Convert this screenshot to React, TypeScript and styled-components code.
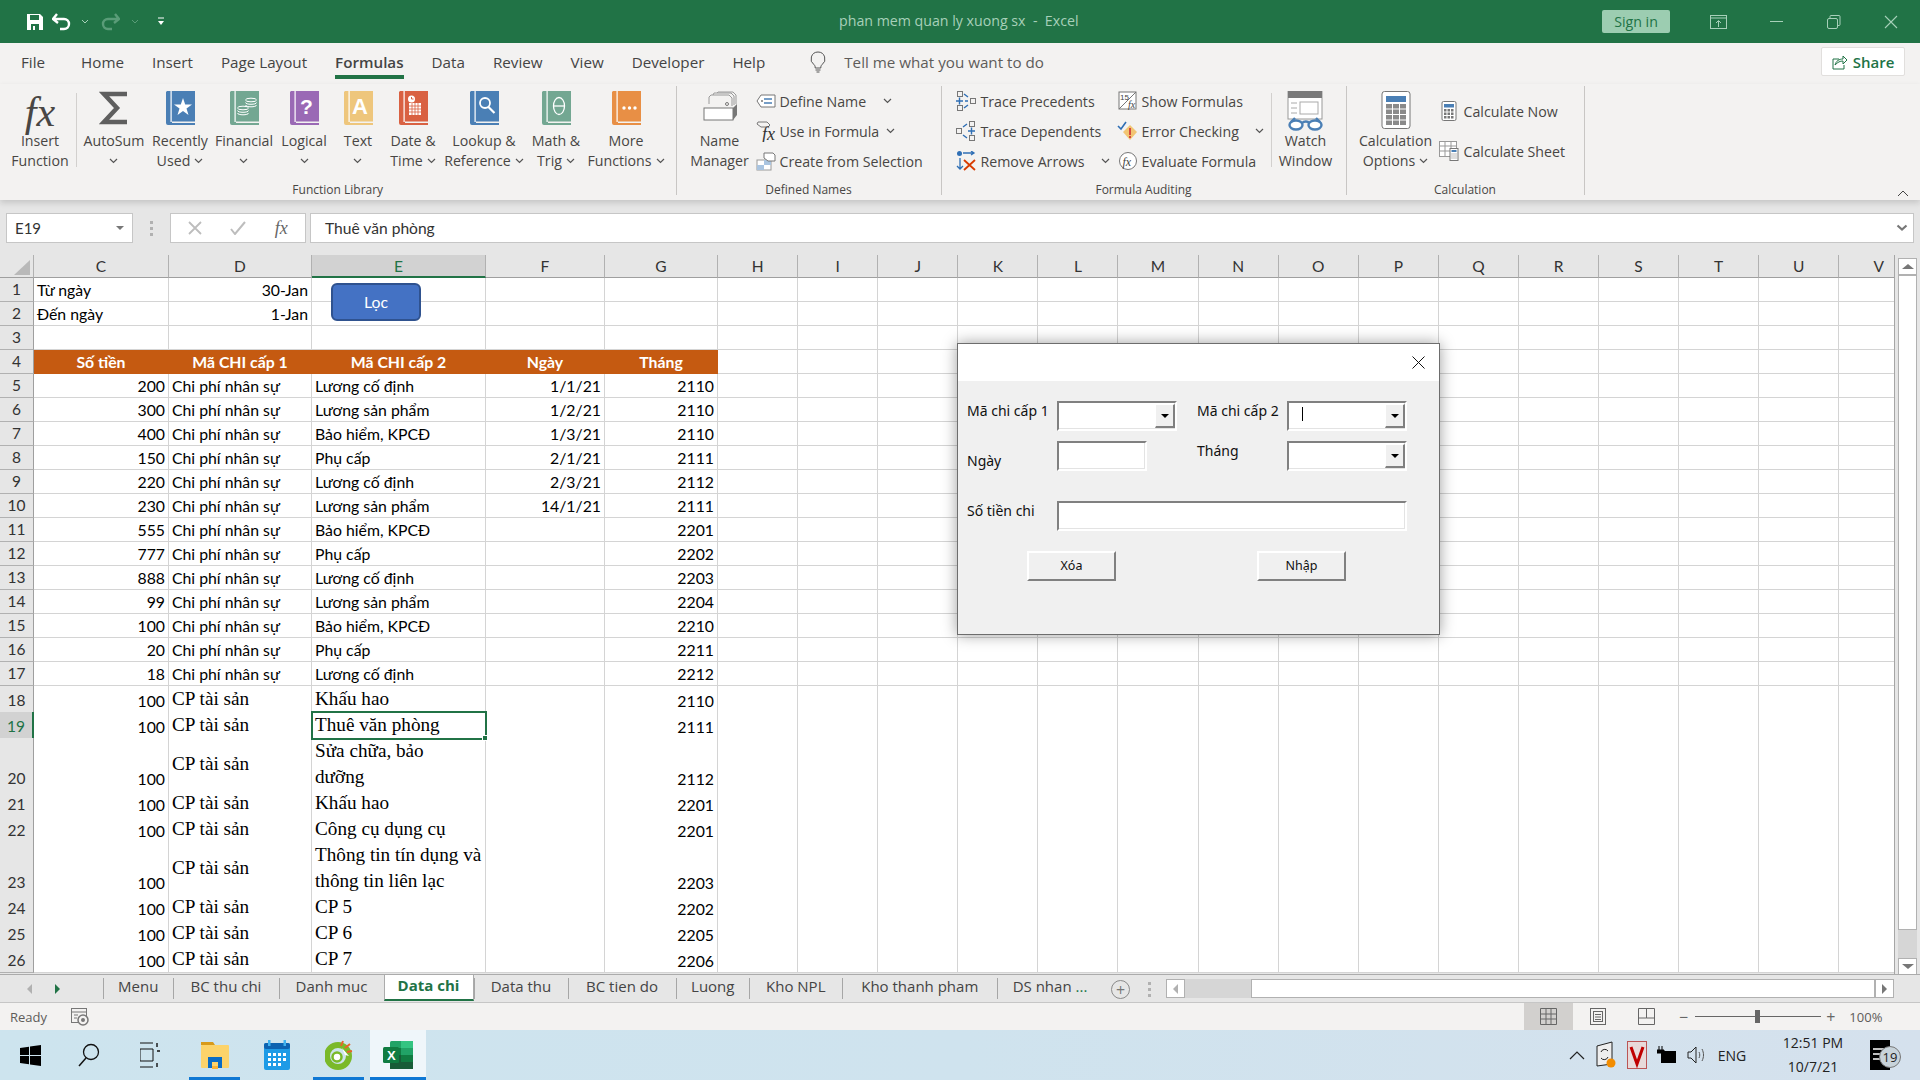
import React from 'react';
import styled, { createGlobalStyle } from 'styled-components';

const UI_FONT = '"Open Sans", "Noto Sans", sans-serif';
const CELL_FONT = 'Lato, "Noto Sans", sans-serif';
const SERIF_FONT = '"Liberation Serif", serif';
const GREEN = '#217346';

const GlobalStyle = createGlobalStyle`
  html, body {
    margin: 0;
    width: 1920px;
    height: 1080px;
    overflow: hidden;
    background: #e6e6e6;
    font-family: ${UI_FONT};
  }
  * { box-sizing: border-box; }
  svg { display: block; flex-shrink: 0; }
`;

const Page = styled.div`
  position: relative;
  width: 1920px;
  height: 1080px;
  display: flex;
  flex-direction: column;
  overflow: hidden;
`;

/* title bar */
const TitleBar = styled.div`
  height: 43px;
  flex-shrink: 0;
  background: ${GREEN};
  display: flex;
  align-items: center;
`;

const QuickAccess = styled.div`
  width: 839px;
  height: 43px;
  display: flex;
  align-items: center;
  padding-left: 27px;
`;

const QuickSlot = styled.div<{ $w: number }>`
  width: ${(p) => p.$w}px;
  display: flex;
  justify-content: center;
`;

const DocTitle = styled.div`
  color: #a7d0b9;
  font-size: 14.2px;
  margin-top: -3px;
  white-space: pre;
`;

const TitleRight = styled.div`
  margin-left: auto;
  display: flex;
  align-items: center;
`;

const SignIn = styled.div`
  width: 68px;
  height: 23px;
  margin-right: 20px;
  background: #9ccdb1;
  border-radius: 2px;
  color: ${GREEN};
  font-size: 14.2px;
  line-height: 23px;
  text-align: center;
`;

const WindowButton = styled.div`
  width: 57.5px;
  display: flex;
  justify-content: center;
`;

/* ribbon tabs */
const TabStrip = styled.div`
  height: 41px;
  flex-shrink: 0;
  background: #f3f2f1;
  display: flex;
  align-items: flex-start;
  padding-left: 21px;
  gap: 28px;
  color: #444;
`;

const RibbonTab = styled.div<{ $active?: boolean; $ml?: number }>`
  margin-top: 8px;
  margin-left: ${(p) => p.$ml || 0}px;
  line-height: 22px;
  padding-bottom: 2px;
  font-size: 15.2px;
  font-weight: ${(p) => (p.$active ? 600 : 400)};
  border-bottom: 4px solid ${(p) => (p.$active ? GREEN : 'transparent')};
  white-space: nowrap;
`;

const TellMe = styled.div`
  margin-top: 8px;
  margin-left: 17px;
  display: flex;
  align-items: center;
  height: 22px;
  gap: 18px;
  font-size: 15.2px;
  color: #5e5c5a;
`;

const ShareButton = styled.div`
  margin-left: auto;
  margin-right: 15px;
  margin-top: 4px;
  width: 84px;
  height: 29px;
  background: #fff;
  border: 1px solid #e1dfdd;
  border-radius: 2px;
  display: flex;
  align-items: center;
  justify-content: center;
  gap: 6px;
  color: ${GREEN};
  font-size: 15px;
  font-weight: 600;
`;

/* ribbon */
const Ribbon = styled.div`
  position: relative;
  z-index: 2;
  height: 116px;
  flex-shrink: 0;
  background: #f3f2f1;
  box-shadow: 0 3px 6px rgba(0, 0, 0, 0.14);
  display: flex;
  align-items: flex-start;
  padding-top: 2px;
  color: #484644;
`;

const Group = styled.div<{ $w: number }>`
  width: ${(p) => p.$w}px;
  height: 109px;
  flex-shrink: 0;
  border-right: 1px solid #c8c6c4;
`;

const GroupBody = styled.div<{ $pl?: number }>`
  height: 95px;
  display: flex;
  padding-left: ${(p) => p.$pl || 0}px;
`;

const GroupLabel = styled.div`
  height: 14px;
  line-height: 18px;
  text-align: center;
  font-size: 12px;
  color: #484644;
`;

const LargeButton = styled.div<{ $w: number }>`
  width: ${(p) => p.$w}px;
  flex-shrink: 0;
  padding-top: 5px;
  display: flex;
  flex-direction: column;
  align-items: center;
`;

const LargeIcon = styled.div`
  height: 34px;
  display: flex;
  align-items: flex-start;
  justify-content: center;
`;

const LargeLabel = styled.div`
  margin-top: 6px;
  font-size: 14.2px;
  line-height: 20px;
  text-align: center;
  white-space: nowrap;
`;

const InlineLine = styled.div`
  display: flex;
  align-items: center;
  justify-content: center;
  gap: 4px;
  height: 20px;
`;

const SmallDivider = styled.div<{ $ml?: number }>`
  width: 1px;
  height: 74px;
  margin-top: 7px;
  margin-left: ${(p) => p.$ml || 0}px;
  flex-shrink: 0;
  background: #d2d0ce;
`;

const SmallColumn = styled.div<{ $w?: number; $ml?: number; $rowH: number; $pt?: number }>`
  width: ${(p) => (p.$w ? `${p.$w}px` : 'auto')};
  margin-left: ${(p) => p.$ml || 0}px;
  padding-top: ${(p) => p.$pt || 0}px;
  flex-shrink: 0;
  display: grid;
  grid-auto-rows: ${(p) => p.$rowH}px;
`;

const SmallButton = styled.div<{ $gap?: number }>`
  display: flex;
  align-items: center;
  gap: ${(p) => p.$gap || 4}px;
  font-size: 14.2px;
  white-space: nowrap;
`;

const SmallIcon = styled.div`
  width: 20px;
  height: 20px;
  display: flex;
  align-items: center;
  justify-content: center;
`;

const ChevronSlot = styled.div<{ $ml: number }>`
  margin-left: ${(p) => p.$ml}px;
`;

const CollapseButton = styled.div`
  margin-left: auto;
  margin-right: 11px;
  margin-top: 104px;
`;

/* formula bar */
const FormulaBar = styled.div`
  height: 55px;
  flex-shrink: 0;
  background: #e6e6e6;
  padding: 13px 6px 0;
  display: flex;
  align-items: flex-start;
`;

const NameBox = styled.div`
  width: 127px;
  height: 30px;
  background: #fff;
  border: 1px solid #c6c6c6;
  display: flex;
  align-items: center;
  justify-content: space-between;
  padding: 0 8px;
  font-family: ${CELL_FONT};
  font-size: 15px;
  color: #333;
`;

const DownTriangle = styled.span<{ $color?: string }>`
  width: 0;
  height: 0;
  border-left: 4px solid transparent;
  border-right: 4px solid transparent;
  border-top: 4px solid ${(p) => p.$color || '#777'};
`;

const Grip = styled.div`
  width: 37px;
  height: 30px;
  display: flex;
  flex-direction: column;
  align-items: center;
  justify-content: center;
  gap: 3px;
  padding-right: 1px;
  span {
    width: 3px;
    height: 3px;
    background: #b1b1b1;
  }
`;

const FxBox = styled.div`
  width: 136px;
  height: 30px;
  background: #fff;
  border: 1px solid #c6c6c6;
  display: flex;
  align-items: center;
  justify-content: space-around;
  padding: 0 3px;
`;

const FormulaInput = styled.div`
  margin-left: 4px;
  width: 1604px;
  height: 30px;
  background: #fff;
  border: 1px solid #c6c6c6;
  display: flex;
  align-items: center;
  justify-content: space-between;
  padding: 0 5px 0 14px;
  font-family: ${CELL_FONT};
  font-size: 15.6px;
  color: #333;
`;

const FxMark = styled.span<{ $size: number; $color: string }>`
  font-family: ${SERIF_FONT};
  font-style: italic;
  font-size: ${(p) => p.$size}px;
  line-height: 1;
  color: ${(p) => p.$color};
`;

/* sheet */
const SheetArea = styled.div`
  height: 719px;
  flex-shrink: 0;
  display: flex;
  background: #e6e6e6;
`;

const Grid = styled.div`
  position: relative;
  width: 1895px;
  height: 719px;
  overflow: hidden;
  border-right: 1px solid #a6a6a6;
`;

const columns = '34px 135px 143px 174px 119px 113px repeat(15, 80.1px)';

const HeaderRow = styled.div`
  display: grid;
  grid-template-columns: ${columns};
  height: 23px;
`;

const ColumnHead = styled.div<{ $selected?: boolean }>`
  height: 23px;
  background: ${(p) => (p.$selected ? '#d2d2d2' : '#e6e6e6')};
  border-right: 1px solid #b1b1b1;
  border-bottom: ${(p) => (p.$selected ? `2px solid ${GREEN}` : '1px solid #9f9f9f')};
  color: ${(p) => (p.$selected ? GREEN : '#333')};
  font-family: ${CELL_FONT};
  font-size: 15.5px;
  line-height: 22px;
  text-align: center;
`;

const Corner = styled.div`
  height: 23px;
  background: #e6e6e6;
  border-right: 1px solid #b1b1b1;
  border-bottom: 1px solid #9f9f9f;
  display: flex;
  justify-content: flex-end;
  align-items: flex-end;
  padding: 0 3px 2px 0;
`;

const SheetRow = styled.div<{ $h: number }>`
  display: grid;
  grid-template-columns: ${columns};
  height: ${(p) => p.$h}px;
`;

const RowHead = styled.div<{ $selected?: boolean }>`
  background: ${(p) => (p.$selected ? '#d2d2d2' : '#e6e6e6')};
  border-right: ${(p) => (p.$selected ? `2px solid ${GREEN}` : '1px solid #9f9f9f')};
  border-bottom: 1px solid #b1b1b1;
  color: ${(p) => (p.$selected ? GREEN : '#333')};
  font-family: ${CELL_FONT};
  font-size: 15.5px;
  display: flex;
  align-items: flex-end;
  justify-content: center;
  line-height: 23px;
`;

const Cell = styled.div<{
  $align?: string;
  $valign?: string;
  $serif?: boolean;
  $head?: boolean;
  $selected?: boolean;
}>`
  position: relative;
  display: flex;
  align-items: ${(p) => p.$valign || 'flex-end'};
  justify-content: ${(p) => p.$align || 'flex-start'};
  padding: 0 3px;
  border-right: 1px solid ${(p) => (p.$head ? '#c55a11' : '#d4d4d4')};
  border-bottom: 1px solid ${(p) => (p.$head ? '#c55a11' : '#d4d4d4')};
  background: ${(p) => (p.$head ? '#c55a11' : '#fff')};
  color: ${(p) => (p.$head ? '#fff' : '#000')};
  font-family: ${(p) => (p.$serif ? SERIF_FONT : CELL_FONT)};
  font-size: ${(p) => (p.$serif ? 19.2 : 15.8)}px;
  font-weight: ${(p) => (p.$head ? 700 : 400)};
  line-height: ${(p) => (p.$serif ? 26 : 23)}px;
  white-space: pre-line;
  ${(p) => p.$selected && `outline: 2px solid ${GREEN}; outline-offset: -1px; z-index: 1;`}
`;

const FillHandle = styled.span`
  position: absolute;
  right: -3px;
  bottom: -3px;
  width: 6px;
  height: 6px;
  background: ${GREEN};
  border: 1px solid #fff;
`;

const FilterButton = styled.div`
  position: absolute;
  left: 331px;
  top: 28px;
  width: 90px;
  height: 38px;
  background: #4472c4;
  border: 2px solid #2f528f;
  border-radius: 6px;
  color: #fff;
  font-family: ${CELL_FONT};
  font-size: 15.8px;
  line-height: 34px;
  text-align: center;
  z-index: 2;
`;

const VScroll = styled.div`
  width: 19px;
  margin-left: 3px;
  margin-top: 3px;
  height: 717px;
  display: flex;
  flex-direction: column;
  background: #d6d6d6;
`;

const VButton = styled.div`
  height: 17px;
  flex-shrink: 0;
  background: #fff;
  border: 1px solid #b1b1b1;
  display: flex;
  align-items: center;
  justify-content: center;
`;

const VThumb = styled.div`
  height: 655px;
  background: #fff;
  border: 1px solid #b1b1b1;
`;

const VSpacer = styled.div`
  flex: 1;
`;

const ArrowUp = styled.span`
  border-left: 6px solid transparent;
  border-right: 6px solid transparent;
  border-bottom: 5px solid #777;
`;

const ArrowDown = styled.span`
  border-left: 6px solid transparent;
  border-right: 6px solid transparent;
  border-top: 5px solid #777;
`;

/* sheet tabs */
const SheetBar = styled.div`
  height: 29px;
  flex-shrink: 0;
  background: #e6e6e6;
  border-top: 1px solid #ababab;
  border-bottom: 1px solid #c6c6c6;
  display: flex;
  align-items: flex-start;
`;

const TabNav = styled.div`
  width: 103px;
  height: 27px;
  display: flex;
  align-items: center;
  padding-left: 27px;
  gap: 23px;
`;

const NavArrow = styled.span<{ $color: string }>`
  border-top: 5px solid transparent;
  border-bottom: 5px solid transparent;
  border-left: 5px solid ${(p) => p.$color};
`;

const NavArrowBack = styled.span`
  border-top: 5px solid transparent;
  border-bottom: 5px solid transparent;
  border-right: 5px solid #b1b1b1;
`;

const SheetTab = styled.div<{ $w: number; $active?: boolean }>`
  width: ${(p) => p.$w}px;
  flex-shrink: 0;
  height: ${(p) => (p.$active ? 26 : 21)}px;
  margin-top: ${(p) => (p.$active ? 0 : 3)}px;
  background: ${(p) => (p.$active ? '#fff' : 'transparent')};
  color: ${(p) => (p.$active ? GREEN : '#444')};
  font-weight: ${(p) => (p.$active ? 700 : 400)};
  font-size: 15px;
  line-height: ${(p) => (p.$active ? 21 : 16)}px;
  text-align: center;
  white-space: nowrap;
  border-left: ${(p) => (p.$active ? '1px solid #ababab' : '1px solid #a6a6a6')};
  border-right: ${(p) => (p.$active ? '1px solid #ababab' : 'none')};
  border-bottom: ${(p) => (p.$active ? `2px solid ${GREEN}` : 'none')};
`;

const MoreDots = styled.span`
  color: ${GREEN};
`;

const AddSheet = styled.div`
  width: 19px;
  height: 19px;
  margin: 5px 0 0 9px;
  border: 1px solid #8a8a8a;
  border-radius: 50%;
  display: flex;
  align-items: center;
  justify-content: center;
  color: #777;
  font-size: 16px;
  line-height: 1;
`;

const SheetGrip = styled.div`
  width: 3px;
  margin: 7px 0 0 18px;
  display: flex;
  flex-direction: column;
  gap: 3px;
  span {
    width: 3px;
    height: 3px;
    background: #b1b1b1;
  }
`;

const HScroll = styled.div`
  margin: 4px 0 0 15px;
  width: 728px;
  height: 19px;
  display: flex;
  background: #d6d6d6;
`;

const HButton = styled.div`
  width: 19px;
  background: #fff;
  border: 1px solid #b1b1b1;
  display: flex;
  align-items: center;
  justify-content: center;
`;

const HTrack = styled.div`
  width: 66px;
`;

const HThumb = styled.div`
  flex: 1;
  background: #fff;
  border: 1px solid #b1b1b1;
`;

/* status bar */
const StatusBar = styled.div`
  height: 27px;
  flex-shrink: 0;
  background: #f3f2f1;
  display: flex;
  align-items: center;
  padding-left: 10px;
  color: #5e5c5a;
  font-size: 13px;
`;

const MacroSlot = styled.div`
  margin-left: 24px;
`;

const ViewButton = styled.div<{ $active?: boolean; $ml?: number }>`
  width: 49px;
  height: 27px;
  margin-left: ${(p) => p.$ml || 0}px;
  background: ${(p) => (p.$active ? '#d2d0ce' : 'transparent')};
  display: flex;
  align-items: center;
  justify-content: center;
`;

const ZoomSign = styled.span<{ $ml: number }>`
  margin-left: ${(p) => p.$ml}px;
  font-size: 16px;
  color: #666;
`;

const ZoomTrack = styled.div`
  position: relative;
  margin-left: 7px;
  width: 126px;
  height: 1px;
  background: #666;
`;

const ZoomThumb = styled.span`
  position: absolute;
  left: 60px;
  top: -6px;
  width: 5px;
  height: 13px;
  background: #666;
`;

const ZoomValue = styled.span`
  margin-left: 14px;
  font-size: 13px;
`;

/* windows taskbar */
const Taskbar = styled.div`
  height: 50px;
  flex-shrink: 0;
  background: linear-gradient(90deg, #cde4ee 0%, #cfe3ee 50%, #d5e1ed 100%);
  display: flex;
  align-items: stretch;
`;

const TaskIcon = styled.div<{ $w: number; $on?: boolean; $current?: boolean; $ml?: number }>`
  width: ${(p) => p.$w}px;
  margin-left: ${(p) => p.$ml || 0}px;
  display: flex;
  align-items: center;
  justify-content: center;
  background: ${(p) => (p.$current ? '#eff6fa' : 'transparent')};
  border-bottom: 3px solid ${(p) => (p.$on ? '#0f78d4' : 'transparent')};
  padding-top: 3px;
`;

const Tray = styled.div`
  margin-left: auto;
  display: flex;
  align-items: center;
  color: #222;
`;

const TraySlot = styled.div<{ $w: number }>`
  width: ${(p) => p.$w}px;
  display: flex;
  justify-content: center;
`;

const TrayText = styled.div`
  width: 40px;
  text-align: center;
  font-size: 14px;
`;

const Clock = styled.div`
  width: 82px;
  margin-left: 20px;
  text-align: center;
  font-size: 14px;
  line-height: 24px;
`;

const Notify = styled.div`
  position: relative;
  width: 41px;
  margin-right: 20px;
  margin-left: 5px;
  display: flex;
  justify-content: center;
`;

const NotifyBadge = styled.span`
  position: absolute;
  left: 20px;
  top: 6px;
  width: 22px;
  height: 22px;
  border-radius: 50%;
  border: 1px solid #777;
  background: #c8d3da;
  font-size: 13px;
  line-height: 20px;
  text-align: center;
  color: #222;
`;

/* user form */
const Dialog = styled.div`
  position: absolute;
  left: 957px;
  top: 343px;
  width: 483px;
  height: 292px;
  z-index: 3;
  border: 1px solid #6d6d6d;
  background: #f0f0f0;
  box-shadow: 0 0 14px rgba(0, 0, 0, 0.38);
`;

const DialogTitle = styled.div`
  height: 37px;
  background: #fff;
  display: flex;
  justify-content: flex-end;
  align-items: center;
  padding-right: 14px;
`;

const DialogBody = styled.div`
  padding: 20px 0 0 9px;
`;

const FormRow = styled.div<{ $mb: number }>`
  display: flex;
  height: 30px;
  margin-bottom: ${(p) => p.$mb}px;
`;

const FormLabel = styled.div<{ $w: number; $top?: number; $left?: number; $ml?: number }>`
  width: ${(p) => p.$w}px;
  margin-left: ${(p) => p.$ml || 0}px;
  padding-top: ${(p) => p.$top || 0}px;
  padding-left: ${(p) => p.$left || 0}px;
  font-family: "Noto Sans", sans-serif;
  font-size: 14px;
  line-height: 20px;
  color: #111;
  white-space: nowrap;
`;

const Sunken = styled.div<{ $w: number }>`
  width: ${(p) => p.$w}px;
  height: 30px;
  background: #fff;
  border-top: 2px solid #808080;
  border-left: 2px solid #808080;
  border-right: 2px solid #fff;
  border-bottom: 2px solid #fff;
  box-shadow: inset -1px -1px 0 #e3e3e3;
  display: flex;
  justify-content: space-between;
`;

const DropButton = styled.div`
  width: 20px;
  height: 24px;
  margin-top: 1px;
  margin-left: auto;
  background: #f0f0f0;
  border-top: 1px solid #fff;
  border-left: 1px solid #fff;
  border-right: 2px solid #808080;
  border-bottom: 2px solid #808080;
  display: flex;
  align-items: center;
  justify-content: center;
`;

const Caret = styled.span`
  width: 1px;
  height: 14px;
  margin: 4px 0 0 13px;
  background: #000;
`;

const FormButtons = styled.div`
  display: flex;
  gap: 141px;
  padding-left: 60px;
`;

const FormButton = styled.div`
  width: 89px;
  height: 30px;
  background: #f0f0f0;
  border-top: 2px solid #fff;
  border-left: 2px solid #fff;
  border-right: 2px solid #808080;
  border-bottom: 2px solid #808080;
  font-family: "Noto Sans", sans-serif;
  font-size: 12.5px;
  line-height: 26px;
  text-align: center;
  color: #111;
`;

/* icons */
const Chevron = () => (
  <svg width="9" height="6" viewBox="0 0 9 6">
    <path d="M1 1l3.5 3.5L8 1" fill="none" stroke="#555" strokeWidth="1.2" />
  </svg>
);

const Book = ({ color, children }: { color: string; children?: React.ReactNode }) => (
  <svg width="30" height="34" viewBox="0 0 30 34">
    <path d="M2 0h28v30.500H7v1.500h23v2H3a2 2 0 0 1-2-2V1z" fill={color} />
    <rect x="5.500" y="0" width="1.200" height="31" fill="#fff" />
    {children}
  </svg>
);

const coin = (x: number, y: number) => (
  <g fill="none" stroke="#fff" strokeWidth="1">
    <ellipse cx={x} cy={y} rx="5.500" ry="1.800" />
    <path d={`M${x - 5.5} ${y + 2.5}c0 2.400 11 2.400 11 0M${x - 5.5} ${y + 5}c0 2.400 11 2.400 11 0`} />
  </g>
);

const Sigma = () => (
  <svg width="30" height="34" viewBox="0 0 30 34">
    <path d="M28 3H5L18 17 5 31H28" fill="none" stroke="#5f5f5f" strokeWidth="4.500" strokeMiterlimit="6" />
  </svg>
);

const NameManagerIcon = () => (
  <svg width="36" height="34" viewBox="0 0 36 34">
    <path d="M7 13V6l2-2h18l3 3v8M11 4l1-2h17l3 3v9M15 2l1-1h15l3 3v9" fill="none" stroke="#9a9a9a" />
    <circle cx="25" cy="13" r="1.500" fill="none" stroke="#777" />
    <rect x="2" y="17" width="29" height="12" fill="#fff" stroke="#777" />
    <path d="M31 17l4-4v11l-4 5z" fill="#777" />
  </svg>
);

const TagIcon = () => (
  <svg width="20" height="18" viewBox="0 0 20 18">
    <path d="M5 3h14v12H5L1 9z" fill="#fff" stroke="#777" />
    <path d="M8 7h8M8 11h8" stroke="#4a7fb5" strokeWidth="1.300" />
    <circle cx="6" cy="9" r="1" fill="#777" />
  </svg>
);

const FormulaTagIcon = () => (
  <svg width="20" height="22" viewBox="0 0 20 22">
    <path d="M2 2h9l3 3-2 2H5L1 4z" fill="none" stroke="#777" />
    <text x="6" y="20" fontFamily="Liberation Serif" fontStyle="italic" fontSize="18" fill="#333">fx</text>
  </svg>
);

const SelectionIcon = () => (
  <svg width="20" height="20" viewBox="0 0 20 20">
    <rect x="1" y="9" width="14" height="10" fill="#fff" stroke="#999" />
    <rect x="1" y="14" width="7" height="5" fill="#a9c4e0" />
    <rect x="8" y="9" width="7" height="5" fill="#a9c4e0" />
    <path d="M8 2h9l2 2v6h-7L8 7z" fill="#fff" stroke="#777" />
  </svg>
);

const TracePrecedentsIcon = () => (
  <svg width="20" height="20" viewBox="0 0 20 20">
    <g fill="none" stroke="#777">
      <rect x="1.500" y="0.500" width="5" height="5" />
      <rect x="1.500" y="14.500" width="5" height="5" />
      <rect x="14.500" y="7.500" width="5" height="5" />
    </g>
    <path d="M0 10h7M3.500 6.500v7M8 3l4 3m0 8l-4 3M9 10h3" stroke="#2f6fb5" strokeWidth="1.400" fill="none" />
  </svg>
);

const TraceDependentsIcon = () => (
  <svg width="20" height="20" viewBox="0 0 20 20">
    <g fill="none" stroke="#777">
      <rect x="0.500" y="7.500" width="5" height="5" />
      <rect x="13.500" y="0.500" width="5" height="5" />
      <rect x="13.500" y="14.500" width="5" height="5" />
    </g>
    <path d="M12 10h7M15.500 6.500v7M7 6l4-3M7 14l4 3" stroke="#2f6fb5" strokeWidth="1.400" fill="none" />
  </svg>
);

const RemoveArrowsIcon = () => (
  <svg width="20" height="20" viewBox="0 0 20 20">
    <circle cx="3.500" cy="2.500" r="2.500" fill="#2f6fb5" />
    <path d="M7 2h11M15 0l3 2-3 2M4 7v11M1 15l3 3 3-3" stroke="#2f6fb5" strokeWidth="1.300" fill="none" />
    <path d="M8 9l11 10M19 9L8 19" stroke="#d83b01" strokeWidth="1.800" />
  </svg>
);

const ShowFormulasIcon = () => (
  <svg width="20" height="20" viewBox="0 0 20 20">
    <rect x="1" y="1" width="17" height="17" fill="#fff" stroke="#777" />
    <path d="M1 18L18 1" stroke="#777" />
    <text x="2" y="9" fontFamily="Liberation Sans" fontSize="8" fill="#444">15</text>
    <text x="10" y="17" fontFamily="Liberation Serif" fontStyle="italic" fontSize="10" fill="#444">fx</text>
  </svg>
);

const ErrorCheckIcon = () => (
  <svg width="21" height="21" viewBox="0 0 21 21">
    <path d="M6 11l7-7 7 7-7 8z" fill="#f2c572" />
    <path d="M13 7v7M13 15v2" stroke="#d13438" strokeWidth="1.700" />
    <path d="M1 5l3 3 5-7" fill="none" stroke="#2f6fb5" strokeWidth="1.600" />
  </svg>
);

const EvaluateIcon = () => (
  <svg width="20" height="20" viewBox="0 0 20 20">
    <circle cx="10" cy="10" r="8.500" fill="#fff" stroke="#777" />
    <text x="4.500" y="14.500" fontFamily="Liberation Serif" fontStyle="italic" fontSize="12" fill="#444">fx</text>
  </svg>
);

const WatchIcon = () => (
  <svg width="38" height="40" viewBox="0 0 38 40">
    <rect x="1" y="0" width="34" height="28" fill="#fff" stroke="#999" />
    <rect x="1" y="0" width="34" height="7" fill="#7a7a7a" />
    <rect x="13" y="11" width="18" height="12" fill="#fff" stroke="#aaa" />
    <path d="M4 12h6M4 17h6M4 22h6" stroke="#aaa" />
    <g fill="#fff" stroke="#4a7fb5" strokeWidth="2.400">
      <ellipse cx="9" cy="34" rx="6.500" ry="4.500" />
      <ellipse cx="28" cy="34" rx="6.500" ry="4.500" />
      <path d="M15 32c2-2 6-2 7 0M4 31l4-4M33 31l-4-4" fill="none" />
    </g>
  </svg>
);

const CalcLarge = () => (
  <svg width="30" height="38" viewBox="0 0 30 38">
    <rect x="1" y="0.500" width="28" height="37" rx="2.500" fill="#fff" stroke="#777" />
    <rect x="5" y="5" width="20" height="6" fill="#4a7fb5" />
    {[0, 1, 2, 3].map((r) =>
      [0, 1, 2].map((c) => (
        <rect key={`${r}-${c}`} x={5 + c * 7} y={13 + r * 5.500} width="6" height="4.500" fill="#8a8a8a" />
      ))
    )}
  </svg>
);

const CalcSmall = () => (
  <svg width="16" height="20" viewBox="0 0 16 20">
    <rect x="1" y="0.500" width="14" height="19" rx="1.500" fill="#fff" stroke="#777" />
    <rect x="3" y="3" width="10" height="3.500" fill="#4a7fb5" />
    {[0, 1, 2].map((r) =>
      [0, 1, 2].map((c) => <rect key={`${r}-${c}`} x={3 + c * 3.500} y={8 + r * 3.500} width="2.500" height="2.500" fill="#777" />)
    )}
  </svg>
);

const CalcSheetIcon = () => (
  <svg width="20" height="20" viewBox="0 0 20 20">
    <rect x="0.500" y="0.500" width="17" height="15" fill="#fff" stroke="#999" />
    <path d="M6 1v15M12 1v15M1 5h17M1 10h17" stroke="#999" />
    <rect x="11" y="7.500" width="8" height="12" fill="#fff" stroke="#777" />
    <rect x="12.500" y="9" width="5" height="2" fill="#4a7fb5" />
    <path d="M12.500 13h5M12.500 15h5M12.500 17h5" stroke="#777" strokeDasharray="1 1" />
  </svg>
);

const Windows = () => (
  <svg width="21" height="21" viewBox="0 0 21 21">
    <path d="M0 3l9-1.300V10H0zM10 1.500L21 0v10H10zM0 11h9v8.300L0 18zM10 11h11v10l-11-1.500z" fill="#000" />
  </svg>
);

const ExplorerIcon = () => (
  <svg width="28" height="30" viewBox="0 0 28 30">
    <path d="M0 2h12l2 3H0z" fill="#d89a1a" />
    <rect x="0" y="5" width="28" height="23" rx="1" fill="#fcd36a" />
    <path d="M7 17h14v11h-4v-6h-6v6H7z" fill="#0a6cc4" />
    <rect x="11" y="26" width="6" height="3" fill="#f9b233" />
  </svg>
);

const CalendarIcon = () => (
  <svg width="26" height="30" viewBox="0 0 26 30">
    <rect x="0" y="3" width="26" height="27" rx="2" fill="#1e9be6" />
    <rect x="0" y="3" width="26" height="6" rx="2" fill="#0c62b0" />
    <rect x="4" y="0" width="2.500" height="6" fill="#3fb1ef" />
    <rect x="19.500" y="0" width="2.500" height="6" fill="#3fb1ef" />
    {[0, 1, 2].map((r) =>
      [0, 1, 2, 3].map((c) => (
        <rect key={`${r}-${c}`} x={4 + c * 5} y={13 + r * 5} width="3" height="3" fill="#fff" opacity={r === 2 && c === 3 ? 0 : 1} />
      ))
    )}
  </svg>
);

const CocCocIcon = () => (
  <svg width="28" height="30" viewBox="0 0 28 30">
    <circle cx="13" cy="16" r="11" fill="none" stroke="#7ab929" strokeWidth="6" />
    <circle cx="12" cy="17" r="4.500" fill="#fff" stroke="#7ab929" strokeWidth="2.500" />
    <path d="M16 6l2-5M20 8l5-4M22 12l5-1" stroke="#e8632b" strokeWidth="2" />
    <path d="M17 8l7 8-4-1z" fill="#fff" />
  </svg>
);

const ExcelIcon = () => (
  <svg width="30" height="28" viewBox="0 0 30 28">
    <rect x="7" y="0" width="23" height="28" rx="1.500" fill="#21a366" />
    <rect x="18" y="0" width="12" height="7" fill="#33c481" />
    <rect x="7" y="7" width="11" height="7" fill="#107c41" />
    <rect x="18" y="14" width="12" height="7" fill="#107c41" />
    <rect x="7" y="14" width="11" height="7" fill="#185c37" />
    <rect x="7" y="21" width="23" height="7" fill="#185c37" />
    <rect x="0" y="6" width="16" height="16" rx="1.500" fill="#107c41" />
    <text x="4" y="18.500" fontFamily="Liberation Sans" fontWeight="700" fontSize="13" fill="#fff">X</text>
  </svg>
);

/* data */
const COLUMN_LETTERS = ['C', 'D', 'E', 'F', 'G', 'H', 'I', 'J', 'K', 'L', 'M', 'N', 'O', 'P', 'Q', 'R', 'S', 'T', 'U', 'V'];

type DataRow = { n: number; h: number; c: string; d: string; e: string; f?: string; g: string; serif?: boolean };

const staff = 'Chi phí nhân sự';
const asset = 'CP tài sản';

const dataRows: DataRow[] = [
  { n: 5, h: 24, c: '200', d: staff, e: 'Lương cố định', f: '1/1/21', g: '2110' },
  { n: 6, h: 24, c: '300', d: staff, e: 'Lương sản phẩm', f: '1/2/21', g: '2110' },
  { n: 7, h: 24, c: '400', d: staff, e: 'Bảo hiểm, KPCĐ', f: '1/3/21', g: '2110' },
  { n: 8, h: 24, c: '150', d: staff, e: 'Phụ cấp', f: '2/1/21', g: '2111' },
  { n: 9, h: 24, c: '220', d: staff, e: 'Lương cố định', f: '2/3/21', g: '2112' },
  { n: 10, h: 24, c: '230', d: staff, e: 'Lương sản phẩm', f: '14/1/21', g: '2111' },
  { n: 11, h: 24, c: '555', d: staff, e: 'Bảo hiểm, KPCĐ', g: '2201' },
  { n: 12, h: 24, c: '777', d: staff, e: 'Phụ cấp', g: '2202' },
  { n: 13, h: 24, c: '888', d: staff, e: 'Lương cố định', g: '2203' },
  { n: 14, h: 24, c: '99', d: staff, e: 'Lương sản phẩm', g: '2204' },
  { n: 15, h: 24, c: '100', d: staff, e: 'Bảo hiểm, KPCĐ', g: '2210' },
  { n: 16, h: 24, c: '20', d: staff, e: 'Phụ cấp', g: '2211' },
  { n: 17, h: 24, c: '18', d: staff, e: 'Lương cố định', g: '2212' },
  { n: 18, h: 26, c: '100', d: asset, e: 'Khấu hao', g: '2110', serif: true },
  { n: 19, h: 26, c: '100', d: asset, e: 'Thuê văn phòng', g: '2111', serif: true },
  { n: 20, h: 52, c: '100', d: asset, e: 'Sửa chữa, bảo\ndưỡng', g: '2112', serif: true },
  { n: 21, h: 26, c: '100', d: asset, e: 'Khấu hao', g: '2201', serif: true },
  { n: 22, h: 26, c: '100', d: asset, e: 'Công cụ dụng cụ', g: '2201', serif: true },
  { n: 23, h: 52, c: '100', d: asset, e: 'Thông tin tín dụng và\nthông tin liên lạc', g: '2203', serif: true },
  { n: 24, h: 26, c: '100', d: asset, e: 'CP 5', g: '2202', serif: true },
  { n: 25, h: 26, c: '100', d: asset, e: 'CP 6', g: '2205', serif: true },
  { n: 26, h: 26, c: '100', d: asset, e: 'CP 7', g: '2206', serif: true },
];

const sheetTabs = [
  { name: 'Menu', w: 69.5 },
  { name: 'BC thu chi', w: 106 },
  { name: 'Danh muc', w: 105 },
  { name: 'Data chi', w: 90, active: true },
  { name: 'Data thu', w: 94 },
  { name: 'BC tien do', w: 108 },
  { name: 'Luong', w: 73.5 },
  { name: 'Kho NPL', w: 92.5 },
  { name: 'Kho thanh pham', w: 155.5 },
];

const EmptyCells = ({ count }: { count: number }) => (
  <>
    {Array.from({ length: count }).map((_, i) => (
      <Cell key={i} />
    ))}
  </>
);

const Large = ({ w, icon, lines }: { w: number; icon: React.ReactNode; lines: React.ReactNode[] }) => (
  <LargeButton $w={w}>
    <LargeIcon>{icon}</LargeIcon>
    <LargeLabel>
      {lines.map((line, i) => (
        <InlineLine key={i}>{line}</InlineLine>
      ))}
    </LargeLabel>
  </LargeButton>
);

const withChevron = (text: string) => (
  <>
    {text}
    <Chevron />
  </>
);

const App: React.FC = () => {
  return (
    <Page>
      <GlobalStyle />
      <TitleBar>
        <QuickAccess>
          <QuickSlot $w={16}>
            <svg width="16" height="16" viewBox="0 0 16 16">
              <path d="M0 0h13l3 3v13H0z" fill="#fff" />
              <rect x="3" y="1" width="9" height="5" fill={GREEN} />
              <rect x="4" y="10" width="8" height="6" fill={GREEN} />
              <rect x="6" y="12" width="2" height="4" fill="#fff" />
            </svg>
          </QuickSlot>
          <QuickSlot $w={38}>
            <svg width="20" height="18" viewBox="0 0 20 18">
              <path d="M5 1L1 6l5 4M2 6h10a5 5 0 0 1 0 10H8" fill="none" stroke="#fff" strokeWidth="2.400" />
            </svg>
          </QuickSlot>
          <QuickSlot $w={8}>
            <svg width="8" height="5" viewBox="0 0 8 5">
              <path d="M1 1l3 3 3-3" fill="none" stroke="#a7d0b9" />
            </svg>
          </QuickSlot>
          <QuickSlot $w={42}>
            <svg width="20" height="18" viewBox="0 0 20 18">
              <path d="M15 1l4 5-5 4M18 6H8a5 5 0 0 0 0 10h4" fill="none" stroke="#5a9c78" strokeWidth="2.400" />
            </svg>
          </QuickSlot>
          <QuickSlot $w={8}>
            <svg width="8" height="5" viewBox="0 0 8 5">
              <path d="M1 1l3 3 3-3" fill="none" stroke="#5a9c78" />
            </svg>
          </QuickSlot>
          <QuickSlot $w={44}>
            <svg width="8" height="9" viewBox="0 0 8 9">
              <path d="M1 1h6" stroke="#fff" />
              <path d="M1 4h6L4 8z" fill="#fff" />
            </svg>
          </QuickSlot>
        </QuickAccess>
        <DocTitle>phan mem quan ly xuong sx  -  Excel</DocTitle>
        <TitleRight>
          <SignIn>Sign in</SignIn>
          <WindowButton>
            <svg width="17" height="14" viewBox="0 0 17 14">
              <rect x="0.500" y="0.500" width="16" height="13" fill="none" stroke="#a7d0b9" />
              <path d="M1 3h15M8.500 12V6M6 8l2.500-2.500L11 8" fill="none" stroke="#a7d0b9" />
            </svg>
          </WindowButton>
          <WindowButton>
            <svg width="13" height="2" viewBox="0 0 13 2">
              <rect width="13" height="1" fill="#a7d0b9" />
            </svg>
          </WindowButton>
          <WindowButton>
            <svg width="14" height="14" viewBox="0 0 14 14">
              <path d="M3 3V1.500a1 1 0 0 1 1-1h8a1 1 0 0 1 1 1v8a1 1 0 0 1-1 1h-1.500" fill="none" stroke="#a7d0b9" />
              <rect x="0.500" y="3.500" width="10" height="10" rx="1.500" fill="none" stroke="#a7d0b9" />
            </svg>
          </WindowButton>
          <WindowButton>
            <svg width="14" height="14" viewBox="0 0 14 14">
              <path d="M1 1l12 12M13 1L1 13" stroke="#a7d0b9" strokeWidth="1.100" />
            </svg>
          </WindowButton>
        </TitleRight>
      </TitleBar>

      <TabStrip>
        <RibbonTab>File</RibbonTab>
        <RibbonTab $ml={8}>Home</RibbonTab>
        <RibbonTab>Insert</RibbonTab>
        <RibbonTab>Page Layout</RibbonTab>
        <RibbonTab $active>Formulas</RibbonTab>
        <RibbonTab>Data</RibbonTab>
        <RibbonTab>Review</RibbonTab>
        <RibbonTab>View</RibbonTab>
        <RibbonTab>Developer</RibbonTab>
        <RibbonTab>Help</RibbonTab>
        <TellMe>
          <svg width="16" height="22" viewBox="0 0 16 22">
            <path d="M8 1a7 7 0 0 0-4 12.700c1 .8 1.200 1.800 1.200 3.300h5.600c0-1.500.2-2.500 1.200-3.300A7 7 0 0 0 8 1z" fill="none" stroke="#555" />
            <path d="M5.500 19h5M6.500 21h3" stroke="#555" />
          </svg>
          Tell me what you want to do
        </TellMe>
        <ShareButton>
          <svg width="15" height="16" viewBox="0 0 15 16">
            <path d="M7 5H1v10h11v-4" fill="none" stroke={GREEN} />
            <path d="M3 11c1-4 4-6 8-6V2l4 4-4 4V7c-3 0-5 1-8 4z" fill="none" stroke={GREEN} />
          </svg>
          Share
        </ShareButton>
      </TabStrip>

      <Ribbon>
        <Group $w={676.5}>
          <GroupBody $pl={4}>
            <Large
              w={72}
              icon={<FxMark $size={42} $color="#484644">fx</FxMark>}
              lines={['Insert', 'Function']}
            />
            <SmallDivider />
            <LargeButton $w={66} style={{ marginLeft: 4 }}>
              <LargeIcon>
                <Sigma />
              </LargeIcon>
              <LargeLabel>
                <InlineLine>AutoSum</InlineLine>
                <InlineLine>
                  <Chevron />
                </InlineLine>
              </LargeLabel>
            </LargeButton>
            <Large
              w={66}
              icon={
                <Book color="#4a7fb5">
                  <polygon points="18,7 20.200,13.500 27,13.500 21.500,17.500 23.500,24 18,20 12.500,24 14.500,17.500 9,13.500 15.800,13.500" fill="#fff" />
                </Book>
              }
              lines={['Recently', withChevron('Used')]}
            />
            <Large
              w={62}
              icon={
                <Book color="#73a792">
                  {coin(22, 9)}
                  {coin(14, 17)}
                </Book>
              }
              lines={['Financial', <Chevron key="c" />]}
            />
            <Large
              w={58}
              icon={
                <Book color="#9a69b5">
                  <text x="11" y="23" fontFamily="Liberation Sans" fontWeight="700" fontSize="21" fill="#fff">?</text>
                </Book>
              }
              lines={['Logical', <Chevron key="c" />]}
            />
            <Large
              w={50}
              icon={
                <Book color="#eec67c">
                  <text x="9" y="23" fontFamily="Liberation Sans" fontWeight="700" fontSize="22" fill="#fff">A</text>
                </Book>
              }
              lines={['Text', <Chevron key="c" />]}
            />
            <Large
              w={60}
              icon={
                <Book color="#d96142">
                  <circle cx="13.500" cy="8" r="3.500" fill="#fff" />
                  <path d="M13.500 6v2h2" stroke="#d96142" fill="none" />
                  <rect x="11" y="12" width="12" height="12" fill="#fff" />
                  <path d="M14 12v12M17 12v12M20 12v12M11 15h12M11 18h12M11 21h12" stroke="#d96142" strokeWidth="0.800" />
                </Book>
              }
              lines={['Date &', withChevron('Time')]}
            />
            <Large
              w={82}
              icon={
                <Book color="#4a7fb5">
                  <circle cx="16" cy="12" r="5" fill="none" stroke="#fff" strokeWidth="1.800" />
                  <path d="M19.500 16l6 6" stroke="#fff" strokeWidth="2.200" />
                </Book>
              }
              lines={['Lookup &', withChevron('Reference')]}
            />
            <Large
              w={62}
              icon={
                <Book color="#73a792">
                  <ellipse cx="18" cy="15" rx="5.500" ry="8.500" fill="none" stroke="#fff" strokeWidth="1.300" />
                  <path d="M12.500 15h11" stroke="#fff" strokeWidth="1.300" />
                </Book>
              }
              lines={['Math &', withChevron('Trig')]}
            />
            <Large
              w={78}
              icon={
                <Book color="#e88f45">
                  <circle cx="13" cy="17" r="1.700" fill="#fff" />
                  <circle cx="18.500" cy="17" r="1.700" fill="#fff" />
                  <circle cx="24" cy="17" r="1.700" fill="#fff" />
                </Book>
              }
              lines={['More', withChevron('Functions')]}
            />
          </GroupBody>
          <GroupLabel>Function Library</GroupLabel>
        </Group>

        <Group $w={265}>
          <GroupBody $pl={11}>
            <Large w={64} icon={<NameManagerIcon />} lines={['Name', 'Manager']} />
            <SmallColumn $rowH={30} $ml={4}>
              <SmallButton>
                <SmallIcon><TagIcon /></SmallIcon>
                Define Name
                <ChevronSlot $ml={13}><Chevron /></ChevronSlot>
              </SmallButton>
              <SmallButton>
                <SmallIcon><FormulaTagIcon /></SmallIcon>
                Use in Formula
                <ChevronSlot $ml={3}><Chevron /></ChevronSlot>
              </SmallButton>
              <SmallButton>
                <SmallIcon><SelectionIcon /></SmallIcon>
                Create from Selection
              </SmallButton>
            </SmallColumn>
          </GroupBody>
          <GroupLabel>Defined Names</GroupLabel>
        </Group>

        <Group $w={405}>
          <GroupBody $pl={14}>
            <SmallColumn $w={162} $rowH={30}>
              <SmallButton $gap={5}>
                <SmallIcon><TracePrecedentsIcon /></SmallIcon>
                Trace Precedents
              </SmallButton>
              <SmallButton $gap={5}>
                <SmallIcon><TraceDependentsIcon /></SmallIcon>
                Trace Dependents
              </SmallButton>
              <SmallButton $gap={5}>
                <SmallIcon><RemoveArrowsIcon /></SmallIcon>
                Remove Arrows
                <ChevronSlot $ml={11}><Chevron /></ChevronSlot>
              </SmallButton>
            </SmallColumn>
            <SmallColumn $w={153} $rowH={30}>
              <SmallButton>
                <SmallIcon><ShowFormulasIcon /></SmallIcon>
                Show Formulas
              </SmallButton>
              <SmallButton>
                <SmallIcon><ErrorCheckIcon /></SmallIcon>
                Error Checking
                <ChevronSlot $ml={12}><Chevron /></ChevronSlot>
              </SmallButton>
              <SmallButton>
                <SmallIcon><EvaluateIcon /></SmallIcon>
                Evaluate Formula
              </SmallButton>
            </SmallColumn>
            <SmallDivider />
            <LargeButton $w={68}>
              <WatchIcon />
              <LargeLabel style={{ marginTop: 0 }}>
                <InlineLine>Watch</InlineLine>
                <InlineLine>Window</InlineLine>
              </LargeLabel>
            </LargeButton>
          </GroupBody>
          <GroupLabel>Formula Auditing</GroupLabel>
        </Group>

        <Group $w={238}>
          <GroupBody $pl={8}>
            <LargeButton $w={82}>
              <CalcLarge />
              <LargeLabel style={{ marginTop: 2 }}>
                <InlineLine>Calculation</InlineLine>
                <InlineLine>{withChevron('Options')}</InlineLine>
              </LargeLabel>
            </LargeButton>
            <SmallColumn $rowH={40} $pt={5} $ml={2}>
              <SmallButton $gap={5}>
                <SmallIcon><CalcSmall /></SmallIcon>
                Calculate Now
              </SmallButton>
              <SmallButton $gap={5}>
                <SmallIcon><CalcSheetIcon /></SmallIcon>
                Calculate Sheet
              </SmallButton>
            </SmallColumn>
          </GroupBody>
          <GroupLabel>Calculation</GroupLabel>
        </Group>

        <CollapseButton>
          <svg width="12" height="7" viewBox="0 0 12 7">
            <path d="M1 6l5-5 5 5" fill="none" stroke="#444" />
          </svg>
        </CollapseButton>
      </Ribbon>

      <FormulaBar>
        <NameBox>
          E19
          <DownTriangle />
        </NameBox>
        <Grip>
          <span />
          <span />
          <span />
        </Grip>
        <FxBox>
          <svg width="14" height="14" viewBox="0 0 14 14">
            <path d="M1 1l12 12M13 1L1 13" stroke="#bdbdbd" strokeWidth="1.800" />
          </svg>
          <svg width="16" height="14" viewBox="0 0 16 14">
            <path d="M1 8l4 5L15 1" fill="none" stroke="#bdbdbd" strokeWidth="2" />
          </svg>
          <FxMark $size={18} $color="#666">fx</FxMark>
        </FxBox>
        <FormulaInput>
          Thuê văn phòng
          <svg width="12" height="8" viewBox="0 0 12 8">
            <path d="M1.500 1.500L6 5.500l4.500-4" fill="none" stroke="#777" strokeWidth="2.200" />
          </svg>
        </FormulaInput>
      </FormulaBar>

      <SheetArea>
        <Grid>
          <HeaderRow>
            <Corner>
              <svg width="16" height="15" viewBox="0 0 16 15">
                <path d="M16 0v15H0z" fill="#b9b9b9" />
              </svg>
            </Corner>
            {COLUMN_LETTERS.map((letter) => (
              <ColumnHead key={letter} $selected={letter === 'E'}>{letter}</ColumnHead>
            ))}
          </HeaderRow>

          <SheetRow $h={24}>
            <RowHead>1</RowHead>
            <Cell>Từ ngày</Cell>
            <Cell $align="flex-end">30-Jan</Cell>
            <EmptyCells count={18} />
          </SheetRow>
          <SheetRow $h={24}>
            <RowHead>2</RowHead>
            <Cell>Đến ngày</Cell>
            <Cell $align="flex-end">1-Jan</Cell>
            <EmptyCells count={18} />
          </SheetRow>
          <SheetRow $h={24}>
            <RowHead>3</RowHead>
            <EmptyCells count={20} />
          </SheetRow>
          <SheetRow $h={24}>
            <RowHead>4</RowHead>
            <Cell $head $align="center">Số tiền</Cell>
            <Cell $head $align="center">Mã CHI cấp 1</Cell>
            <Cell $head $align="center">Mã CHI cấp 2</Cell>
            <Cell $head $align="center">Ngày</Cell>
            <Cell $head $align="center">Tháng</Cell>
            <EmptyCells count={15} />
          </SheetRow>

          {dataRows.map((row) => (
            <SheetRow key={row.n} $h={row.h}>
              <RowHead $selected={row.n === 19}>{row.n}</RowHead>
              <Cell $align="flex-end" $serif={false}>{row.c}</Cell>
              <Cell $serif={row.serif} $valign={row.h > 26 ? 'center' : 'flex-end'}>{row.d}</Cell>
              <Cell $serif={row.serif} $selected={row.n === 19}>
                {row.e}
                {row.n === 19 && <FillHandle />}
              </Cell>
              <Cell $align="flex-end">{row.f}</Cell>
              <Cell $align="flex-end">{row.g}</Cell>
              <EmptyCells count={15} />
            </SheetRow>
          ))}

          <FilterButton>Lọc</FilterButton>
        </Grid>

        <VScroll>
          <VButton>
            <ArrowUp />
          </VButton>
          <VThumb />
          <VSpacer />
          <VButton>
            <ArrowDown />
          </VButton>
        </VScroll>
      </SheetArea>

      <SheetBar>
        <TabNav>
          <NavArrowBack />
          <NavArrow $color={GREEN} />
        </TabNav>
        {sheetTabs.map((tab) => (
          <SheetTab key={tab.name} $w={tab.w} $active={tab.active}>{tab.name}</SheetTab>
        ))}
        <SheetTab $w={105}>
          DS nhan <MoreDots>...</MoreDots>
        </SheetTab>
        <AddSheet>+</AddSheet>
        <SheetGrip>
          <span />
          <span />
          <span />
        </SheetGrip>
        <HScroll>
          <HButton>
            <NavArrowBack />
          </HButton>
          <HTrack />
          <HThumb />
          <HButton>
            <NavArrow $color="#777" />
          </HButton>
        </HScroll>
      </SheetBar>

      <StatusBar>
        Ready
        <MacroSlot>
          <svg width="18" height="18" viewBox="0 0 18 18">
            <rect x="0.500" y="0.500" width="15" height="14" fill="none" stroke="#777" />
            <path d="M1 4h14M3 7h4M3 10h3" stroke="#777" />
            <circle cx="12" cy="12" r="5" fill="#f3f2f1" stroke="#777" strokeWidth="1.500" />
            <circle cx="12" cy="12" r="2" fill="#777" />
          </svg>
        </MacroSlot>
        <ViewButton $active $ml={1435}>
          <svg width="17" height="17" viewBox="0 0 17 17">
            <path d="M.5.5h16v16H.5zM6 1v15M11 1v15M1 6h15M1 11h15" fill="none" stroke="#666" />
          </svg>
        </ViewButton>
        <ViewButton>
          <svg width="16" height="17" viewBox="0 0 16 17">
            <rect x="0.500" y="0.500" width="15" height="16" fill="none" stroke="#666" />
            <rect x="3.500" y="3.500" width="9" height="10" fill="none" stroke="#666" />
            <path d="M5 6.500h6M5 9h6M5 11.500h6" stroke="#666" />
          </svg>
        </ViewButton>
        <ViewButton>
          <svg width="17" height="17" viewBox="0 0 17 17">
            <path d="M.5.5h16v16H.5zM8.500 1v9H1M8.500 10h8" fill="none" stroke="#666" />
          </svg>
        </ViewButton>
        <ZoomSign $ml={8}>−</ZoomSign>
        <ZoomTrack>
          <ZoomThumb />
        </ZoomTrack>
        <ZoomSign $ml={5}>+</ZoomSign>
        <ZoomValue>100%</ZoomValue>
      </StatusBar>

      <Taskbar>
        <TaskIcon $w={60}><Windows /></TaskIcon>
        <TaskIcon $w={58}>
          <svg width="22" height="24" viewBox="0 0 22 24">
            <circle cx="13" cy="9" r="7.500" fill="none" stroke="#111" strokeWidth="1.300" />
            <path d="M8 15l-7 8" stroke="#111" strokeWidth="1.500" />
          </svg>
        </TaskIcon>
        <TaskIcon $w={64}>
          <svg width="20" height="26" viewBox="0 0 20 26">
            <path d="M0 1h13M0 25h13M0 7h13v12H0z" fill="none" stroke="#111" />
            <path d="M17 1v4M17 9h3M17 21v4" stroke="#111" strokeWidth="1.400" />
          </svg>
        </TaskIcon>
        <TaskIcon $w={51} $on $ml={7}><ExplorerIcon /></TaskIcon>
        <TaskIcon $w={73}><CalendarIcon /></TaskIcon>
        <TaskIcon $w={51} $on><CocCocIcon /></TaskIcon>
        <TaskIcon $w={56} $on $current $ml={6}><ExcelIcon /></TaskIcon>
        <Tray>
          <TraySlot $w={30}>
            <svg width="16" height="9" viewBox="0 0 16 9">
              <path d="M1 8l7-7 7 7" fill="none" stroke="#222" strokeWidth="1.200" />
            </svg>
          </TraySlot>
          <TraySlot $w={30}>
            <svg width="22" height="30" viewBox="0 0 22 30">
              <path d="M1 6l15-4v22l-15 2z" fill="#eee" stroke="#222" />
              <path d="M5 12a4 4 0 0 1 7-1M12 17a4 4 0 0 1-7 1" fill="none" stroke="#222" />
              <circle cx="15" cy="23" r="4.500" fill="#f28c00" />
            </svg>
          </TraySlot>
          <TraySlot $w={30}>
            <svg width="20" height="28" viewBox="0 0 20 28">
              <rect x="0.500" y="0.500" width="19" height="27" fill="#e8dada" stroke="#b55" />
              <path d="M4 6l6 17 6-17" fill="none" stroke="#c00000" strokeWidth="3" />
            </svg>
          </TraySlot>
          <TraySlot $w={30}>
            <svg width="20" height="18" viewBox="0 0 20 18">
              <rect x="4" y="5" width="15" height="12" fill="#000" />
              <path d="M2 0v4M5 0v4M0 4h7v3H0z" stroke="#000" />
            </svg>
          </TraySlot>
          <TraySlot $w={30}>
            <svg width="20" height="20" viewBox="0 0 20 20">
              <path d="M1 7h3l5-5v16l-5-5H1z" fill="none" stroke="#222" />
              <path d="M12 7c1 2 1 4 0 6M15 4c2 4 2 8 0 12" fill="none" stroke="#555" />
            </svg>
          </TraySlot>
          <TrayText>ENG</TrayText>
          <Clock>
            12:51 PM
            <br />
            10/7/21
          </Clock>
          <Notify>
            <svg width="20" height="30" viewBox="0 0 20 30">
              <rect y="0" width="20" height="30" fill="#000" />
              <path d="M3 9h14M3 14h14M3 19h9" stroke="#fff" strokeWidth="1.500" />
            </svg>
            <NotifyBadge>19</NotifyBadge>
          </Notify>
        </Tray>
      </Taskbar>

      <Dialog>
        <DialogTitle>
          <svg width="13" height="13" viewBox="0 0 13 13">
            <path d="M.5.5l12 12M12.500.5l-12 12" stroke="#111" />
          </svg>
        </DialogTitle>
        <DialogBody>
          <FormRow $mb={10}>
            <FormLabel $w={90}>Mã chi cấp 1</FormLabel>
            <Sunken $w={120}>
              <DropButton><DownTriangle $color="#000" /></DropButton>
            </Sunken>
            <FormLabel $w={90} $ml={20}>Mã chi cấp 2</FormLabel>
            <Sunken $w={120}>
              <Caret />
              <DropButton><DownTriangle $color="#000" /></DropButton>
            </Sunken>
          </FormRow>
          <FormRow $mb={30}>
            <FormLabel $w={90} $top={10}>Ngày</FormLabel>
            <Sunken $w={90} />
            <FormLabel $w={120} $ml={20} $left={30}>Tháng</FormLabel>
            <Sunken $w={120}>
              <DropButton><DownTriangle $color="#000" /></DropButton>
            </Sunken>
          </FormRow>
          <FormRow $mb={20}>
            <FormLabel $w={90}>Số tiền chi</FormLabel>
            <Sunken $w={350} />
          </FormRow>
          <FormButtons>
            <FormButton>Xóa</FormButton>
            <FormButton>Nhập</FormButton>
          </FormButtons>
        </DialogBody>
      </Dialog>
    </Page>
  );
};

export default App;
